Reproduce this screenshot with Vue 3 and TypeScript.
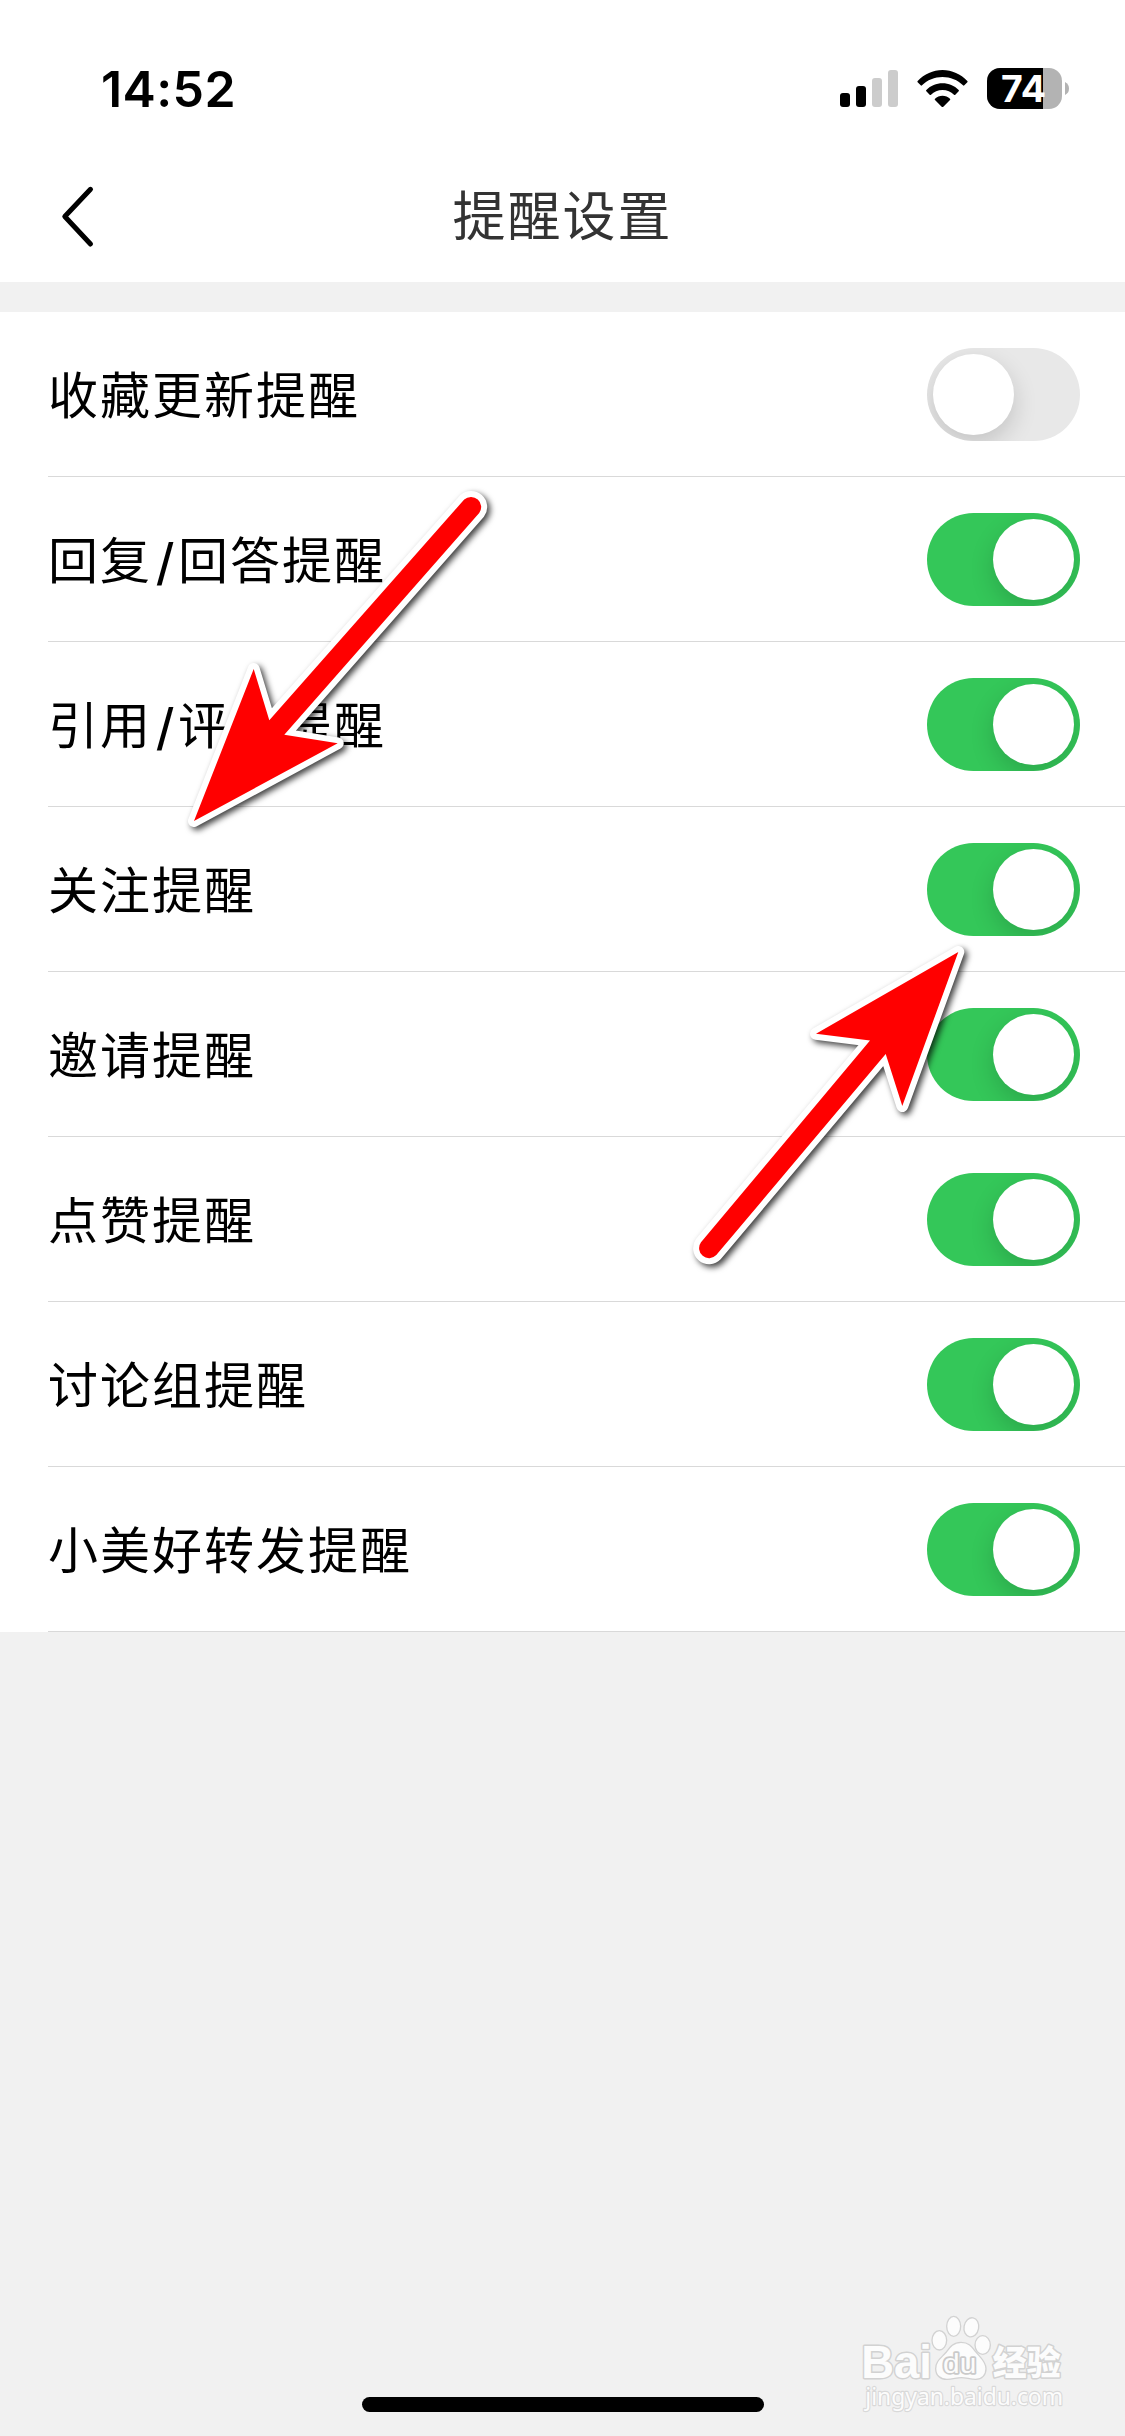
<script setup lang="ts">
import { ref } from 'vue'

interface ReminderSetting {
  id: string
  parts: string[]
  enabled: boolean
}

const settings = ref<ReminderSetting[]>([
  { id: 'favorite', parts: ['收藏更新提醒'], enabled: false },
  { id: 'reply', parts: ['回复', '/', '回答提醒'], enabled: true },
  { id: 'quote', parts: ['引用', '/', '评论提醒'], enabled: true },
  { id: 'follow', parts: ['关注提醒'], enabled: true },
  { id: 'invite', parts: ['邀请提醒'], enabled: true },
  { id: 'like', parts: ['点赞提醒'], enabled: true },
  { id: 'group', parts: ['讨论组提醒'], enabled: true },
  { id: 'forward', parts: ['小美好转发提醒'], enabled: true },
])

function toggle(item: ReminderSetting) {
  item.enabled = !item.enabled
}
</script>

<template>
  <div class="screen">
    <header class="top">
      <div class="status">
        <span class="time">14:52</span>
        <div class="indicators">
          <svg class="signal" width="58" height="38" viewBox="0 0 58 38">
            <rect x="0" y="23" width="10" height="14" rx="3" fill="#000" />
            <rect x="16" y="16" width="10" height="21" rx="3" fill="#000" />
            <rect x="32" y="8" width="10" height="29" rx="3" fill="#ccc" />
            <rect x="48" y="0" width="10" height="37" rx="3" fill="#ccc" />
          </svg>
          <svg class="wifi" width="51" height="38" viewBox="0 0 153 114">
            <path d="M2 33C22 12 48 0 76.500 0S131 12 151 33Q153 35 151 37L142 46Q140 48 138 46C122 30 100 21 76.500 21S31 30 15 46Q13 48 11 46L2 37Q0 35 2 33Z" />
            <path d="M28 60C41 47 58 40 76.500 40S112 47 125 60Q127 62 125 64L115 74Q113 76 111 74C102 65 90 60 76.500 60S51 65 42 74Q40 76 38 74L28 64Q26 62 28 60Z" />
            <path d="M54 86C60 80 68 77 76.500 77S93 80 99 86Q101 88 99 90L79 110Q76.500 112 74 110L54 90Q52 88 54 86Z" />
          </svg>
          <svg class="battery" width="82" height="41" viewBox="0 0 82 41">
            <defs>
              <clipPath id="charge"><rect width="56" height="41" /></clipPath>
            </defs>
            <rect width="75" height="41" rx="13" fill="#b3b3b3" />
            <rect width="75" height="41" rx="13" fill="#000" clip-path="url(#charge)" />
            <path d="M78 14Q82 16 82 20.500T78 27Z" fill="#b3b3b3" />
            <text x="14" y="34" textLength="45" lengthAdjust="spacingAndGlyphs">74</text>
          </svg>
        </div>
      </div>
      <nav class="nav">
        <svg class="back" width="36" height="64" viewBox="0 0 36 64">
          <path d="M31.500 5.300L5.800 32.500L31.500 60" />
        </svg>
        <h1 class="title">提醒设置</h1>
      </nav>
    </header>

    <main class="list">
      <div v-for="item in settings" :key="item.id" class="row">
        <span class="label"><span v-for="(part, i) in item.parts" :key="i" :class="{ slash: part === '/' }">{{ part }}</span></span>
        <button class="switch" :class="{ on: item.enabled }" @click="toggle(item)">
          <span class="knob"></span>
        </button>
      </div>
    </main>

    <footer class="bottom"><div class="home"></div></footer>

    <svg class="arrows" width="1125" height="2436" viewBox="0 0 1125 2436">
      <path d="M464.200 499.600L269.300 720.300L253.700 669L194 821L337.700 743.300L284.300 734.700L479.200 513A10.100 10.100 0 0 0 464.200 499.600Z" />
      <path d="M701 1242.300L870 1040.500L816 1033.700L958.300 952L902.300 1106L885.700 1054L716.300 1255.100A10 10 0 0 1 701 1242.300Z" />
    </svg>

    <svg class="watermark" width="285" height="156" viewBox="0 0 855 468">
      <g class="mark">
        <text class="bai" x="64" y="294" textLength="212" lengthAdjust="spacingAndGlyphs">Bai</text>
        <ellipse cx="298" cy="181" rx="22" ry="29" />
        <ellipse cx="341" cy="139" rx="21" ry="30" />
        <ellipse cx="394" cy="142" rx="22" ry="29" transform="rotate(10 394 142)" />
        <ellipse cx="428" cy="195" rx="23" ry="28" />
        <path d="M363 187C340 187 330 201 319 216C305 233 287 242 287 266C287 287 302 298 321 298C338 298 350 293 364 293C378 293 391 298 407 298C426 298 438 285 438 266C438 243 419 231 406 214C395 199 386 187 363 187Z" />
        <text class="du" x="309" y="278" textLength="100" lengthAdjust="spacingAndGlyphs">du</text>
        <text class="jingyan" x="458" y="284" textLength="204" lengthAdjust="spacingAndGlyphs">经验</text>
        <text class="site" x="76" y="374" textLength="593" lengthAdjust="spacingAndGlyphs">jingyan.baidu.com</text>
      </g>
    </svg>
  </div>
</template>

<style>
body {
  background: #f1f1f1;
}
</style>

<style scoped>
.screen {
  position: relative;
  display: flex;
  flex-direction: column;
  width: 1125px;
  height: 2436px;
  overflow: hidden;
  background: #f1f1f1;
  font-family: 'Noto Sans CJK SC', sans-serif;
}

.top {
  height: 282px;
  background: #fff;
}

.status {
  display: flex;
  justify-content: space-between;
  height: 150px;
  padding: 0 56px 0 101px;
}

.time {
  padding-top: 59px;
  font: 600 50px/60px Inter, sans-serif;
  letter-spacing: 0.4px;
}

.indicators {
  display: flex;
  padding-top: 68px;
}

.signal {
  margin: 2px 19px 0 0;
}

.wifi {
  margin: 2px 19px 0 0;
}

.battery {
  overflow: visible;
}

.battery text {
  font: 700 37px Inter, sans-serif;
  fill: #fff;
}

.nav {
  display: grid;
  grid-template-columns: 160px 1fr 160px;
  align-items: center;
  height: 132px;
}

.back {
  margin-left: 59px;
}

.back path {
  fill: none;
  stroke: #000;
  stroke-width: 5;
  stroke-linecap: round;
  stroke-linejoin: round;
}

.title {
  margin: 0 0 6px;
  color: #333;
  font-size: 53px;
  font-weight: 400;
  line-height: 80px;
  letter-spacing: 2px;
  text-align: center;
}

.list {
  margin-top: 30px;
  background: #fff;
}

.row {
  display: flex;
  align-items: center;
  justify-content: space-between;
  box-sizing: border-box;
  height: 165px;
  padding: 0 45px 0 48px;
  background: linear-gradient(#d9d9d9, #d9d9d9) 48px 100% / 100% 1px no-repeat;
}

.label {
  display: flex;
  height: 80px;
  margin-bottom: 6px;
  color: #000;
  font-size: 50px;
  line-height: 80px;
  letter-spacing: 2px;
}

.slash {
  width: 26px;
  margin-top: 8px;
  font-family: 'Liberation Sans', sans-serif;
  font-size: 60px;
  letter-spacing: 0;
  text-align: center;
}

.switch {
  width: 153px;
  height: 93px;
  padding: 6px;
  overflow: hidden;
  border: 0;
  border-radius: 46.5px;
  background: #e8e8e8;
}

.knob {
  display: block;
  width: 81px;
  height: 81px;
  border-radius: 50%;
  background: #fff;
  box-shadow: 0 9px 24px rgba(0, 0, 0, 0.16);
}

.switch.on {
  background: #34c759;
}

.on .knob {
  margin-left: 60px;
}

.bottom {
  display: flex;
  justify-content: center;
  margin-top: auto;
  padding-bottom: 24px;
}

.home {
  width: 402px;
  height: 15px;
  border-radius: 8px;
  background: #000;
}

.arrows {
  position: absolute;
  top: 0;
  left: 0;
  pointer-events: none;
}

.arrows path {
  fill: #f00;
  stroke: #fff;
  stroke-width: 12;
  stroke-linejoin: round;
  paint-order: stroke;
  filter: drop-shadow(3px 3px 3px rgba(0, 0, 0, 0.75));
}

.watermark {
  position: absolute;
  right: 0;
  bottom: 0;
  pointer-events: none;
}

.mark {
  fill: #fcfcfc;
  stroke: #d2d2d2;
  stroke-width: 4;
}

.mark text {
  paint-order: stroke;
  stroke-linejoin: round;
  stroke-width: 9;
}

.bai {
  font: 700 138px 'Liberation Sans', sans-serif;
}

.mark .du {
  font: 400 82px 'Liberation Sans', sans-serif;
  stroke: #cacaca;
  stroke-width: 10;
}

.jingyan {
  font: 900 104px 'Noto Sans CJK SC', sans-serif;
}

.mark .site {
  font: 400 72px 'Noto Sans', sans-serif;
  stroke: #d9d9d9;
  stroke-width: 7;
}
</style>
